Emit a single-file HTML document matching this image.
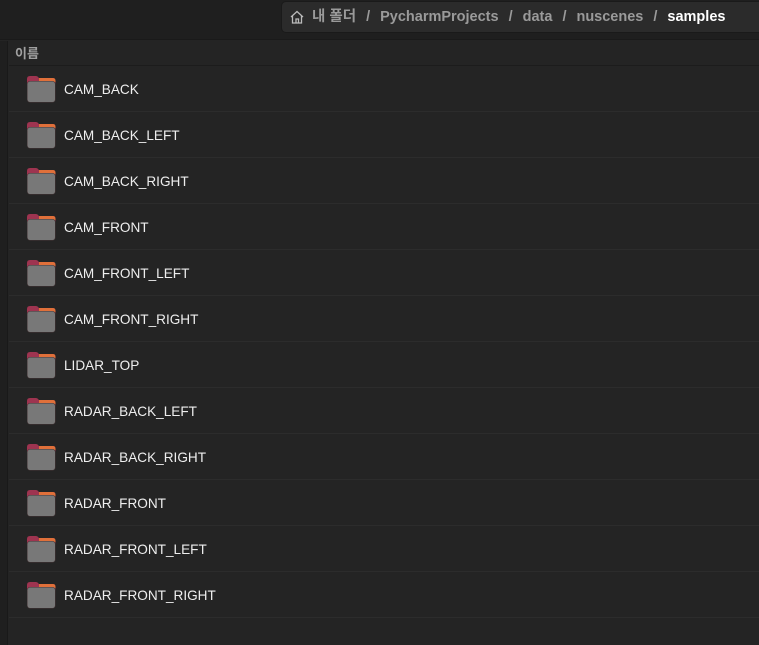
<!DOCTYPE html>
<html><head><meta charset="utf-8"><style>
*{margin:0;padding:0;box-sizing:border-box}
body{width:759px;height:645px;background:#242424;position:relative;overflow:hidden;font-family:"Liberation Sans","Noto Sans CJK KR",sans-serif;color:#eee}
.top{position:absolute;left:0;top:0;width:759px;height:40px;background:#1f1f1f;border-bottom:1px solid #1a1a1a}
.path{position:absolute;left:281px;top:1px;width:490px;height:32px;background:#2b2b2b;border:1px solid #1a1a1a;border-radius:5px;font-size:14.5px;font-weight:bold;color:#9a9a9a;line-height:31px;padding-left:30px;white-space:nowrap}
.path b{color:#fff}
.path .s{margin:0 10px}
.left{position:absolute;left:0;top:41px;width:8px;height:604px;background:#1f1f1f;border-right:1px solid #191919}
.hdr{position:absolute;left:9px;top:41px;width:750px;height:25px;border-bottom:1px solid #1c1c1c;font-size:13px;color:#a0a0a0;font-weight:bold;padding-left:6px;line-height:25px}
.row{position:absolute;left:9px;width:750px;height:46px;border-bottom:1px solid #2c2c2c;font-size:13.6px;color:#eee;line-height:47px;padding-left:55px}
.f{position:absolute;left:17px;top:9px;width:30px;height:28px}
</style></head><body>
<div class="top"></div>
<div class="path"><svg style="position:absolute;left:7px;top:7px" width="16" height="16" viewBox="0 0 16 16"><path d="M2 8 L8 2.5 L14 8 M3.5 7 V14 H12.5 V7 M7 14 V10 H9.5 V14" fill="none" stroke="#bbb" stroke-width="1.3"/></svg>내 폴더<span class="s">/</span>PycharmProjects<span class="s">/</span>data<span class="s">/</span>nuscenes<span class="s">/</span><b>samples</b></div>
<div class="left"></div>
<div class="hdr">이름</div>
<div id="rows"></div>
<script>
const n=["CAM_BACK","CAM_BACK_LEFT","CAM_BACK_RIGHT","CAM_FRONT","CAM_FRONT_LEFT","CAM_FRONT_RIGHT","LIDAR_TOP","RADAR_BACK_LEFT","RADAR_BACK_RIGHT","RADAR_FRONT","RADAR_FRONT_LEFT","RADAR_FRONT_RIGHT"];
let h="";n.forEach((t,i)=>{h+=`<div class="row" style="top:${66+i*46}px"><svg class="f" viewBox="0 0 30 28"><path d="M1 4 Q1 1 4 1 H10 Q11.5 1 12.5 2.5 L13 3 H27 Q29.5 3 29.5 6 V12 H1 Z" fill="#9e3450"/><path d="M13 3 H27 Q29.5 3 29.5 6 V7 H13 Z" fill="#e0703a"/><rect x="1" y="6" width="28.5" height="21.5" rx="3" fill="#453536"/><rect x="1.5" y="6.5" width="27.5" height="20.5" rx="2.6" fill="#787878"/></svg>${t}</div>`});
document.getElementById("rows").innerHTML=h;
</script>
</body></html>
